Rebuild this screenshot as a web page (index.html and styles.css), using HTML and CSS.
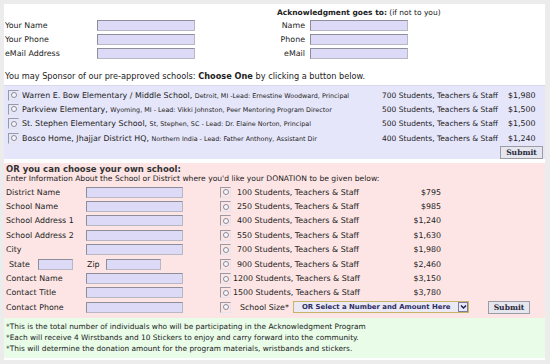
FILE: index.html
```html
<!DOCTYPE html>
<html>
<head>
<meta charset="utf-8">
<link rel="stylesheet" href="styles.css">
</head>
<body>
<div class="page">
  <section class="top">
    <div class="top-grid">
      <div class="spacer"></div>
      <div class="ack-head"><b>Acknowledgment goes to:</b> (if not to you)</div>
      <div class="lbl">Your Name</div><div class="inp"></div><div></div><div class="rlbl">Name</div><div class="inp"></div>
      <div class="lbl">Your Phone</div><div class="inp"></div><div></div><div class="rlbl">Phone</div><div class="inp"></div>
      <div class="lbl">eMail Address</div><div class="inp"></div><div></div><div class="rlbl">eMail</div><div class="inp"></div>
    </div>
    <p class="sponsor">You may Sponsor of our pre-approved schools: <b>Choose One</b> by clicking a button below.</p>
  </section>

  <section class="pre">
    <div class="pre-row"><span class="radio"><span class="dot"></span></span><span class="sname">Warren E. Bow Elementary / Middle School, <small>Detroit, MI -Lead: Ernestine Woodward, Principal</small></span><span class="cnt">700 Students, Teachers &amp; Staff</span><span class="amt">$1,980</span></div>
    <div class="pre-row"><span class="radio"><span class="dot"></span></span><span class="sname">Parkview Elementary, <small>Wyoming, MI - Lead: Vikki Johnston, Peer Mentoring Program Director</small></span><span class="cnt">500 Students, Teachers &amp; Staff</span><span class="amt">$1,500</span></div>
    <div class="pre-row"><span class="radio"><span class="dot"></span></span><span class="sname">St. Stephen Elementary School, <small>St, Stephen, SC - Lead: Dr. Elaine Norton, Principal</small></span><span class="cnt">500 Students, Teachers &amp; Staff</span><span class="amt">$1,500</span></div>
    <div class="pre-row"><span class="radio"><span class="dot"></span></span><span class="sname">Bosco Home, Jhajjar District HQ, <small>Northern India - Lead: Father Anthony, Assistant Dir</small></span><span class="cnt">400 Students, Teachers &amp; Staff</span><span class="amt">$1,240</span></div>
    <div class="pre-submit"><span class="btn">Submit</span></div>
  </section>

  <section class="own">
    <h2 class="own-head">OR you can choose your own school:</h2>
    <p class="own-sub">Enter Information About the School or District where you'd like your DONATION to be given below:</p>
    <div class="own-grid">
      <div class="lbl">District Name</div><div class="inp"></div><div></div><span class="radio"><span class="dot"></span></span><div class="opt">100 Students, Teachers &amp; Staff</div><div class="oamt">$795</div>
      <div class="lbl">School Name</div><div class="inp"></div><div></div><span class="radio"><span class="dot"></span></span><div class="opt">250 Students, Teachers &amp; Staff</div><div class="oamt">$985</div>
      <div class="lbl">School Address 1</div><div class="inp"></div><div></div><span class="radio"><span class="dot"></span></span><div class="opt">400 Students, Teachers &amp; Staff</div><div class="oamt">$1,240</div>
      <div class="lbl">School Address 2</div><div class="inp"></div><div></div><span class="radio"><span class="dot"></span></span><div class="opt">550 Students, Teachers &amp; Staff</div><div class="oamt">$1,630</div>
      <div class="lbl">City</div><div class="inp"></div><div></div><span class="radio"><span class="dot"></span></span><div class="opt">700 Students, Teachers &amp; Staff</div><div class="oamt">$1,980</div>
      <div class="state-row"><span class="st-lbl">State</span><span class="inp st-inp"></span><span class="zip-lbl">Zip</span><span class="inp zip-inp"></span></div><div></div><span class="radio"><span class="dot"></span></span><div class="opt">900 Students, Teachers &amp; Staff</div><div class="oamt">$2,460</div>
      <div class="lbl">Contact Name</div><div class="inp"></div><div></div><span class="radio"><span class="dot"></span></span><div class="opt narrow">1200 Students, Teachers &amp; Staff</div><div class="oamt">$3,150</div>
      <div class="lbl">Contact Title</div><div class="inp"></div><div></div><span class="radio"><span class="dot"></span></span><div class="opt narrow">1500 Students, Teachers &amp; Staff</div><div class="oamt">$3,780</div>
      <div class="lbl">Contact Phone</div><div class="inp"></div><div></div><span class="radio"><span class="dot"></span></span>
      <div class="size-row"><span class="size-lbl">School Size*</span><span class="select"><span class="sel-text">OR Select a Number and Amount Here</span><span class="sel-arrow"><svg width="7" height="6" viewBox="0 0 7 6"><path d="M1 1.5 L3.5 4 L6 1.5" fill="none" stroke="#1a1a50" stroke-width="1.4"/></svg></span></span><span class="btn btn2">Submit</span></div>
    </div>
  </section>

  <section class="notes">
    <p>*This is the total number of individuals who will be participating in the Acknowledgment Program</p>
    <p>*Each will receive 4 Wirstbands and 10 Stickers to enjoy and carry forward into the community.</p>
    <p>*This will determine the donation amount for the program materials, wristbands and stickers.</p>
  </section>
</div>
</body>
</html>
```
FILE: styles.css
```css
* { box-sizing: border-box; }
html, body { margin: 0; padding: 0; }
body {
  background: #ececec;
  font-family: "DejaVu Sans", Verdana, sans-serif;
  font-size: 7.9px;
  color: #222;
  width: 550px;
  height: 364px;
  overflow: hidden;
}
.page {
  margin: 4px 5px 0 4px;
  background: #fff;
  height: 356px;
}
p { margin: 0; }

.top { padding: 2px 0 0 1px; height: 81px; }
.top-grid {
  display: grid;
  grid-template-columns: 92px 98px 82px 33px 98px;
  grid-template-rows: 12px 14px 14px 14px;
  align-items: center;
}
.spacer { grid-column: 1 / 4; grid-row: 1; }
.ack-head { grid-column: 4 / 6; grid-row: 1; white-space: nowrap; font-size: 7.5px; }
.rlbl { text-align: right; padding-right: 5px; }
.inp {
  height: 11px;
  background: #dcdaf6;
  border: 1px solid #b8b8c4;
  border-top-color: #8e8e9a;
  border-left-color: #8e8e9a;
}
.sponsor { margin-top: 11px; font-size: 8.2px; }

.pre {
  background: #e6e6fa;
  height: 74px;
  padding: 2px 2px 0 4px;
  border-top: 1px solid #d8d8ec;
}
.pre-row {
  display: grid;
  grid-template-columns: 14px 360px 125px 40px;
  height: 14.3px;
  align-items: center;
}
.sname { font-size: 7.9px; white-space: nowrap; overflow: hidden; }
.sname small { font-size: 6.4px; }
.cnt { white-space: nowrap; font-size: 7.5px; }
.amt { white-space: nowrap; padding-left: 1px; }
.radio {
  width: 11px;
  height: 11px;
  display: flex;
  align-items: center;
  justify-content: center;
  border: 1px solid #e4e4ee;
  border-top-color: #9a9aa6;
  border-left-color: #9a9aa6;
}
.dot {
  width: 6px;
  height: 6px;
  border-radius: 50%;
  border: 1px solid #8a8a94;
  background: #f6f6ff;
}
.pre-submit { display: flex; justify-content: flex-end; margin-top: 0.8px; }
.btn {
  display: inline-flex;
  align-items: center;
  justify-content: center;
  height: 13px;
  width: 43px;
  background: #e6e6ee;
  border: 1px solid #9c9ca6;
  font-weight: bold;
  font-family: "DejaVu Serif", serif;
  font-size: 7.6px;
  color: #2a2a40;
}

.own {
  margin-top: 4px;
  background: #fde5e5;
  height: 155px;
  padding: 1px 0 0 2px;
}
.own-head {
  margin: 0;
  font-size: 8.5px;
  font-weight: bold;
  letter-spacing: 0;
  line-height: 11px;
  color: #333;
}
.own-sub { line-height: 8px; font-size: 7.6px; }
.own-grid {
  margin-top: 2px;
  display: grid;
  grid-template-columns: 80px 97px 37px 11px 180px 30px;
  grid-auto-rows: 14.4px;
  align-items: center;
}
.opt { padding-left: 6px; white-space: nowrap; }
.opt.narrow { padding-left: 2px; }
.oamt { text-align: right; white-space: nowrap; }
.state-row { grid-column: 1 / 3; display: flex; align-items: center; }
.st-lbl { width: 32px; padding-left: 3px; }
.st-inp { width: 35px; }
.zip-lbl { width: 33px; padding-left: 14px; }
.zip-inp { width: 55px; }
.size-row { grid-column: 5 / 7; display: flex; align-items: center; white-space: nowrap; }
.size-lbl { width: 62px; padding-left: 9px; flex: none; }
.select {
  flex: none;
  width: 176px;
  height: 12px;
  display: flex;
  align-items: center;
  justify-content: space-between;
  background: #ebe9f4;
  border: 1px solid #c8b468;
  padding-left: 8px;
}
.sel-text { font-weight: bold; color: #2c2c66; font-size: 6.9px; }
.sel-arrow {
  width: 10px;
  height: 10px;
  display: flex;
  align-items: center;
  justify-content: center;
  background: #e8e8f4;
  border: 1px solid #7c7c9c;
}
.btn2 { flex: none; margin-left: 19px; width: 42px; }

.notes {
  background: #e8fce8;
  height: 40px;
  padding: 4px 0 0 2px;
  font-size: 7.4px;
  line-height: 10.8px;
}
```
